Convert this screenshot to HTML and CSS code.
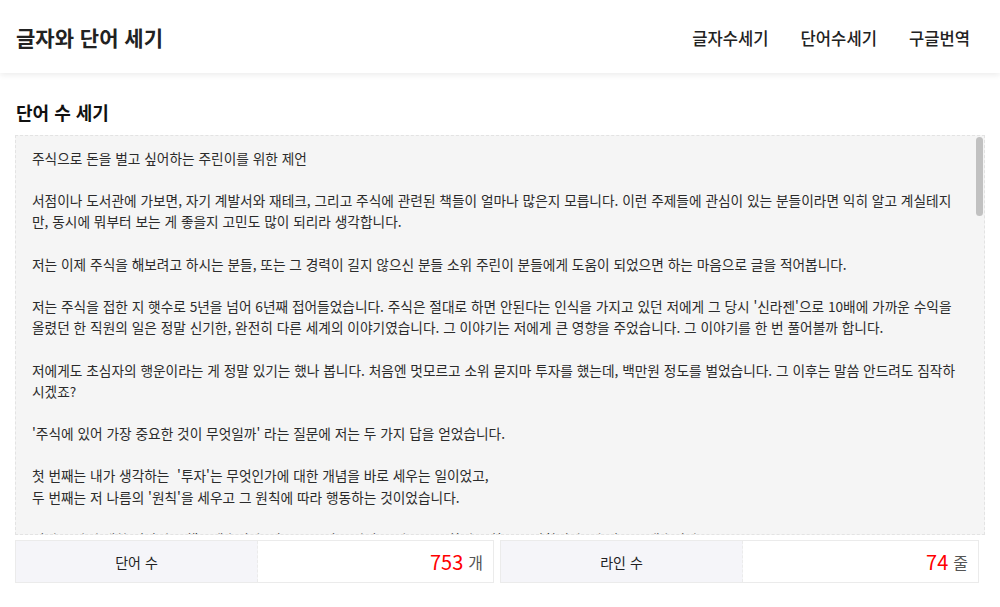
FILE: index.html
```html
<!DOCTYPE html>
<html lang="ko">

<head>
    <meta charset="UTF-8">
    <meta name="viewport" content="width=device-width, initial-scale=1.0">
    <title>글자와 단어 세기</title>
    <link rel="stylesheet" href="styles.css">
</head>

<body>
    <header class="top-bar">
        <h1 class="site-title">글자와 단어 세기</h1>
        <nav class="top-nav">
            <a href="#">글자수세기</a>
            <a href="#">단어수세기</a>
            <a href="#">구글번역</a>
        </nav>
    </header>

    <main class="content">
        <h2 class="section-title">단어 수 세기</h2>
        <div class="input-wrap">
            <textarea id="wordInput" class="text-input" spellcheck="false">
주식으로 돈을 벌고 싶어하는 주린이를 위한 제언

서점이나 도서관에 가보면, 자기 계발서와 재테크, 그리고 주식에 관련된 책들이 얼마나 많은지 모릅니다. 이런 주제들에 관심이 있는 분들이라면 익히 알고 계실테지만, 동시에 뭐부터 보는 게 좋을지 고민도 많이 되리라 생각합니다.

저는 이제 주식을 해보려고 하시는 분들, 또는 그 경력이 길지 않으신 분들 소위 주린이 분들에게 도움이 되었으면 하는 마음으로 글을 적어봅니다.

저는 주식을 접한 지 햇수로 5년을 넘어 6년째 접어들었습니다. 주식은 절대로 하면 안된다는 인식을 가지고 있던 저에게 그 당시 '신라젠'으로 10배에 가까운 수익을 올렸던 한 직원의 일은 정말 신기한, 완전히 다른 세계의 이야기였습니다. 그 이야기는 저에게 큰 영향을 주었습니다. 그 이야기를 한 번 풀어볼까 합니다.

저에게도 초심자의 행운이라는 게 정말 있기는 했나 봅니다. 처음엔 멋모르고 소위 묻지마 투자를 했는데, 백만원 정도를 벌었습니다. 그 이후는 말씀 안드려도 짐작하시겠죠?

'주식에 있어 가장 중요한 것이 무엇일까' 라는 질문에 저는 두 가지 답을 얻었습니다.

첫 번째는 내가 생각하는  '투자'는 무엇인가에 대한 개념을 바로 세우는 일이었고,
두 번째는 저 나름의 '원칙'을 세우고 그 원칙에 따라 행동하는 것이었습니다.

먼저 투자에 대한 이야기를 해보겠습니다. 많은 분들이 투자와 투기를 구분하지 못하고 시작합니다. 저 역시 그랬습니다.

누군가 좋다고 하는 종목, 뉴스에 오르내리는 종목을 따라 사고 팔기를 반복했습니다. 결과는 말할 것도 없었습니다.

투자란 기업의 가치를 보고 그 가치가 성장할 것이라는 믿음에 돈을 맡기는 일입니다. 가격이 아니라 가치를 보는 눈이 필요합니다.

그래서 저는 재무제표를 읽는 법부터 다시 공부했습니다. 매출과 영업이익, 부채비율 같은 기본적인 숫자들이 조금씩 눈에 들어오기 시작했습니다.

다음은 원칙에 대한 이야기입니다. 시장은 언제나 우리의 감정을 흔듭니다. 오를 때는 더 사고 싶고, 떨어질 때는 모두 팔고 싶어집니다.

이럴 때 기댈 수 있는 것이 바로 나만의 원칙입니다. 원칙이 없으면 시장의 소음에 휩쓸리기 쉽습니다.

제가 세운 원칙은 단순합니다. 첫째, 이해하지 못하는 기업에는 투자하지 않는다.

둘째, 한 종목에 전체 자산의 일정 비율 이상을 넣지 않는다.

셋째, 손실이 정해둔 기준을 넘으면 미련 없이 정리한다.

넷째, 매수하기 전에 왜 사는지를 반드시 글로 적어둔다.

이 원칙들을 지키는 것은 생각보다 어렵습니다. 하지만 지키려고 노력하는 것만으로도 투자의 결과는 분명히 달라졌습니다.

물론 원칙을 지켰는데도 손실을 본 적이 많습니다. 그래도 원칙 없이 잃었을 때와는 배우는 것이 전혀 달랐습니다.

주린이 분들께 꼭 드리고 싶은 말씀은 조급해하지 말라는 것입니다. 주식 시장은 내일도, 내년에도 열려 있습니다.

처음에는 적은 금액으로 시작해서 경험을 쌓으시길 바랍니다. 잃어도 괜찮은 돈으로 배우는 것이 가장 값싼 수업료입니다.

그리고 기록하는 습관을 가지시길 권합니다. 매수와 매도의 이유, 그때의 감정을 적어두면 나중에 큰 자산이 됩니다.

마지막으로, 주식은 인생의 전부가 아닙니다. 본업에 충실하고 건강을 챙기는 것이 결국 가장 좋은 투자입니다.

긴 글 읽어주셔서 감사합니다. 이 글이 조금이나마 여러분의 첫걸음에 도움이 되었으면 합니다.

다음 글에서는 제가 실제로 종목을 고르는 방법에 대해 조금 더 자세히 이야기해보겠습니다.</textarea>
            <!-- headless hides native scrollbars, so the thumb is drawn on top -->
            <div class="scroll-thumb"></div>
        </div>

        <div class="stats">
            <div class="stat-card">
                <div class="stat-label">단어 수</div>
                <div class="stat-value"><span class="stat-number">753</span><span class="stat-unit">개</span></div>
            </div>
            <div class="stat-card">
                <div class="stat-label">라인 수</div>
                <div class="stat-value"><span class="stat-number">74</span><span class="stat-unit">줄</span></div>
            </div>
        </div>
    </main>
</body>

</html>
```

FILE: styles.css
```css
body {
    margin: 0;
    padding: 0;
    font-family: "Noto Sans CJK KR", "Noto Sans", sans-serif;
    background-color: #ffffff;
    color: #222;
}

.top-bar {
    height: 73px;
    padding: 0 15px 0 16px;
    display: flex;
    align-items: center;
    justify-content: space-between;
    background: #ffffff;
    box-shadow: 0 2px 6px rgba(0, 0, 0, 0.08);
    box-sizing: border-box;
}

.site-title {
    margin: 0;
    font-size: 21px;
    font-weight: 700;
    color: #222;
}

.top-nav {
    display: flex;
    align-items: center;
    padding-top: 3px;
}

.top-nav a {
    padding: 0 16px;
    font-size: 16.6px;
    font-weight: 500;
    color: #222;
    text-decoration: none;
}

.top-nav a:last-child {
    padding-right: 15px;
}

.content {
    padding: 26px 15px 0 15px;
}

.section-title {
    margin: 0 1px 9px 1px;
    font-size: 18px;
    font-weight: 700;
    color: #111;
    line-height: 27px;
}

.input-wrap {
    position: relative;
    width: 970px;
}

.text-input {
    display: block;
    width: 970px;
    height: 400px;
    margin: 0;
    padding: 12px 26px 12px 16px;
    font-family: "Noto Sans CJK KR", "Noto Sans", sans-serif;
    font-size: 13.7px;
    line-height: 21.15px;
    color: #2b2b2b;
    background-color: #f5f5f5;
    border: 1px dashed #e3e3e3;
    box-sizing: border-box;
    resize: none;
    outline: none;
}

.scroll-thumb {
    position: absolute;
    top: 2px;
    right: 2px;
    width: 7px;
    height: 79px;
    border-radius: 4px;
    background-color: #c1c1c1;
    pointer-events: none;
}

.stats {
    display: grid;
    grid-template-columns: 479px 479px;
    gap: 6px;
    margin-top: 5px;
}

.stat-card {
    display: grid;
    grid-template-columns: 242px 1fr;
    height: 43px;
    border: 1px solid #ebebeb;
    box-sizing: border-box;
}

.stat-label {
    display: flex;
    align-items: center;
    justify-content: center;
    font-size: 14px;
    color: #222;
    background-color: #f5f5f9;
    border-right: 1px dashed #ebebeb;
}

.stat-value {
    display: flex;
    align-items: center;
    justify-content: flex-end;
    padding-right: 10px;
}

.stat-number {
    font-size: 20px;
    color: #ff0000;
}

.stat-unit {
    margin-left: 5px;
    font-size: 16px;
    color: #555;
}
```
